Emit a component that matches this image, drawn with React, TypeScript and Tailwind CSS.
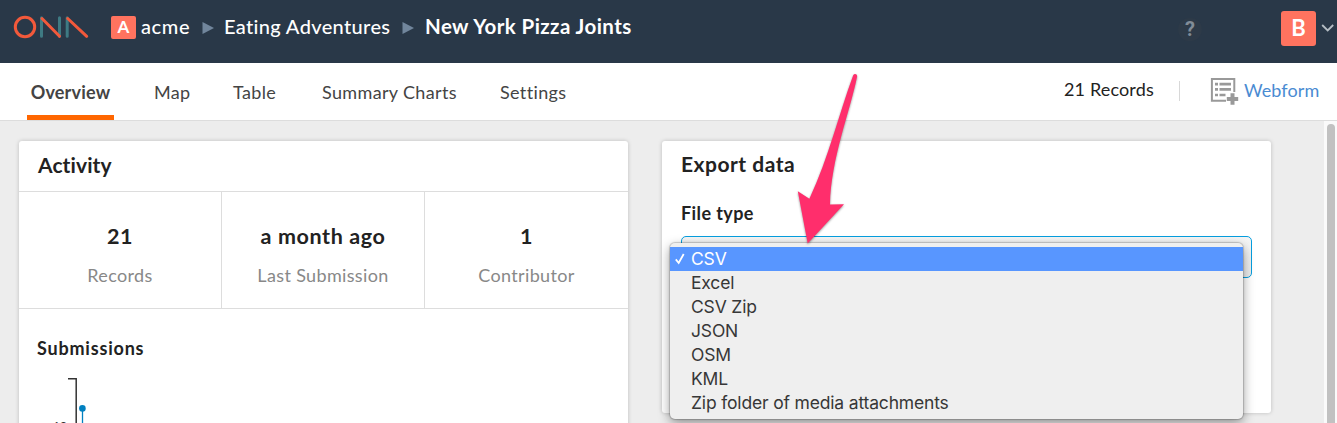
import React from "react";

const tabs = [
  { label: "Map", className: "ml-[43px] w-[36px]" },
  { label: "Table", className: "ml-[43px] w-[46px]" },
  { label: "Summary Charts", className: "ml-[43px] w-[135px]" },
  { label: "Settings", className: "ml-[43px] w-[67px]" },
];

const stats = [
  { value: "21", label: "Records" },
  { value: "a month ago", label: "Last Submission" },
  { value: "1", label: "Contributor" },
];

const fileTypes = ["CSV", "Excel", "CSV Zip", "JSON", "OSM", "KML", "Zip folder of media attachments"];

function Logo() {
  return (
    <svg className="ml-[13px] h-[26px] w-[77px] shrink-0" viewBox="13 14 77 26" fill="none" strokeWidth="3" strokeLinecap="round">
      <g stroke="#3e7a83">
        <path d="M41.5 17.7V36.3M59.5 17.7V36.3M67.2 17.7V36.3" />
      </g>
      <g stroke="#f2593b">
        <circle cx="25" cy="27" r="9.7" />
        <path d="M42 18.5L59.5 36.3M67.7 18.5L86.7 36.3" />
      </g>
    </svg>
  );
}

function Separator() {
  return (
    <svg className="h-[12px] w-[12px] shrink-0" viewBox="0 0 12 12">
      <path d="M0.5 0L12 6L0.5 12Z" fill="#71869c" />
    </svg>
  );
}

function Header() {
  return (
    <header className="flex h-[63px] items-start bg-[#293848] text-[20px] leading-[26px] text-white">
      <div className="flex h-[54px] items-center">
        <Logo />
        <span className="ml-[21px] flex h-[23px] w-[25px] items-center justify-center rounded-[2px] bg-[#ff735f] text-[17px] font-bold">A</span>
        <span className="-mt-[2px] ml-[5px] w-[49px] whitespace-nowrap font-medium tracking-[0.6px]">acme</span>
        <span className="ml-[12px] mt-[2px]"><Separator /></span>
        <span className="-mt-[2px] ml-[10px] w-[166px] whitespace-nowrap font-medium tracking-[0.35px]">Eating Adventures</span>
        <span className="ml-[12px] mt-[2px]"><Separator /></span>
        <span className="-mt-[2px] ml-[11px] whitespace-nowrap text-[20.5px] font-bold tracking-[0.42px]">New York Pizza Joints</span>
      </div>
      <div className="ml-auto flex h-[56px] items-center">
        <span className="mr-[79px] mt-[2px] flex h-[23px] w-[24px] items-center justify-center rounded-full bg-[#2d3a48] font-['Roboto',sans-serif] text-[20px] font-bold text-[#818c97]">?</span>
        <span className="flex h-[35px] w-[35px] items-center justify-center rounded-[3px] bg-[#ff735f] text-[22px] font-bold">B</span>
        <svg className="ml-[5px] mr-[3px] h-[10px] w-[13px]" viewBox="0 0 13 10" fill="none" stroke="#b5bdc4" strokeWidth="1.8">
          <path d="M1.2 2L6.7 7.5L12.2 2" />
        </svg>
      </div>
    </header>
  );
}

function WebformIcon() {
  return (
    <svg className="h-[28px] w-[29px]" viewBox="0 0 29 28" fill="none" stroke="#999999">
      <path d="M16 23.8H1.9V1.9H24.3V15" strokeWidth="2" />
      <path d="M5 7.1H8M5 12.4H8M5 18H8" strokeWidth="2.6" />
      <path d="M9.5 7.1H21M9.5 12.4H21M9.5 18H15.5" strokeWidth="2.6" />
      <path d="M22.5 16.3V27.7M16.8 22H28.2" strokeWidth="4" />
    </svg>
  );
}

function Navigation() {
  return (
    <nav className="flex h-[58px] border-b border-[#dddddd] bg-white text-[18px] leading-[24px] text-[#444444]">
      <div className="ml-[27px] flex h-[57px] w-[87px] justify-center border-b-[5px] border-[#ff6600] pt-[17px] font-bold tracking-[0.2px]">Overview</div>
      <div className="-ml-[3px] flex pt-[17px] tracking-[0.35px]">
        {tabs.map((tab) => (
          <span key={tab.label} className={`whitespace-nowrap ${tab.className}`}>{tab.label}</span>
        ))}
      </div>
      <div className="ml-auto flex h-[55px] items-center pr-[18px]">
        <span className="-mt-[3px] w-[90px] whitespace-nowrap tracking-[0.15px] text-[#222222]">21 Records</span>
        <span className="ml-[25px] mr-[30px] h-[20px] w-px bg-[#d8d8d8]" />
        <WebformIcon />
        <span className="-mt-px ml-[5px] w-[75px] whitespace-nowrap tracking-[0.1px] text-[#4a8bd2]">Webform</span>
      </div>
    </nav>
  );
}

function ActivityCard() {
  return (
    <section className="h-[340px] w-[609px] shrink-0 rounded-[3px] bg-white shadow-[0_0_4px_rgba(0,0,0,0.2)]">
      <h2 className="flex h-[51px] items-center border-b border-[#dddddd] pb-[3px] pl-[19px] text-[21px] font-bold tracking-[0.1px]">Activity</h2>
      <div className="grid h-[117px] grid-cols-3 divide-x divide-[#dddddd] border-b border-[#dddddd]">
        {stats.map((stat) => (
          <div key={stat.label} className="flex flex-col items-center whitespace-nowrap pt-[31px]">
            <strong className="text-[21.5px] leading-[26px] tracking-[0.6px]">{stat.value}</strong>
            <span className="mt-[14px] text-[18px] leading-[24px] tracking-[0.35px] text-[#888888]">{stat.label}</span>
          </div>
        ))}
      </div>
      <h3 className="pl-[18px] pt-[27px] text-[18px] font-bold leading-[24px] tracking-[0.8px]">Submissions</h3>
      <svg className="ml-[25px] mt-[14px] h-[80px] w-[80px]" viewBox="0 0 80 80" fill="none">
        <path d="M24 4.8H32.2V80" stroke="#333333" strokeWidth="1.5" />
        <path d="M38.5 35V80" stroke="#0080c0" strokeWidth="1.3" />
        <circle cx="38.4" cy="34.4" r="3.3" fill="#0080c0" />
        <text x="9" y="56" fill="#333333" fontSize="12">10</text>
      </svg>
    </section>
  );
}

function FileTypeMenu() {
  return (
    <div className="absolute -left-[12px] top-[6px] h-[176px] w-[573px] rounded-[5px] bg-[#efefef] pt-[4px] font-['Inter',sans-serif] text-[17.5px] leading-[24px] tracking-[-0.17px] text-[#373737] shadow-[0_0_1px_1px_rgba(0,0,0,0.18),0_4px_12px_rgba(0,0,0,0.4)]">
      {fileTypes.map((type, index) => (
        <div key={type} className={index === 0 ? "flex h-[24px] items-center bg-[#5896ff] text-white" : "flex h-[24px] items-center"}>
          <span className="flex w-[21px] shrink-0 pl-[5px]">
            {index === 0 && (
              <svg className="h-[12px] w-[10px]" viewBox="0 0 10 12" fill="none" stroke="currentColor" strokeWidth="1.8">
                <path d="M0.8 6.4L3.7 10L8.7 1" />
              </svg>
            )}
          </span>
          <span className="whitespace-nowrap">{type}</span>
        </div>
      ))}
    </div>
  );
}

function PointerArrow() {
  return (
    <svg className="pointer-events-none absolute left-[790px] top-[65px] h-[190px] w-[80px]" viewBox="790 65 80 190">
      <path
        className="drop-shadow-[0_1px_1px_rgba(0,0,0,0.4)]"
        d="M853.2 75.2C854.4 73.1 857.8 74.1 857 77C850 112 831 158 830 204.5L844 204.3L807.7 243.5L797.8 191.2L809.4 198.8C829 157 839 113 853.2 75.2Z"
        fill="#ff2e6c"
      />
    </svg>
  );
}

function ExportCard() {
  return (
    <section className="ml-[34px] h-[272px] w-[609px] shrink-0 rounded-[3px] bg-white px-[19px] pt-[10px] shadow-[0_0_4px_rgba(0,0,0,0.2)]">
      <h2 className="text-[21px] font-bold leading-[26px] tracking-[0.5px]">Export data</h2>
      <h3 className="mt-[24px] text-[18px] font-bold leading-[24px] tracking-[0.4px]">File type</h3>
      <div className="relative mt-[11px] h-[42px] w-[571px] rounded-[5px] border border-[#069edf] bg-[linear-gradient(#f5f5f5,#ececec)]">
        <FileTypeMenu />
      </div>
    </section>
  );
}

export default function App() {
  return (
    <div className="relative h-[423px] w-[1337px] overflow-hidden bg-[#ededed] font-['Lato',sans-serif] text-[#222222]">
      <Header />
      <Navigation />
      <div className="flex h-[302px]">
        <main className="flex flex-1 items-start overflow-hidden pl-[19px] pt-[20px]">
          <ActivityCard />
          <ExportCard />
        </main>
        <div className="flex w-[13px] shrink-0 justify-center bg-[#fafafa] pt-[3px]">
          <div className="ml-px h-[320px] w-[8px] rounded-full bg-[#c1c1c1]" />
        </div>
      </div>
      <PointerArrow />
    </div>
  );
}
